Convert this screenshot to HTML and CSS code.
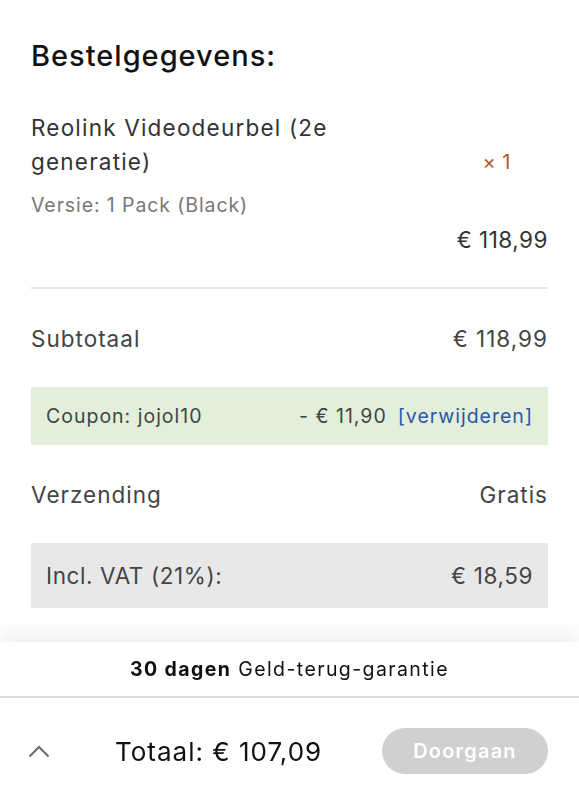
FILE: index.html
```html
<!DOCTYPE html>
<html lang="nl">
<head>
<meta charset="utf-8">
<link rel="stylesheet" href="styles.css">
</head>
<body>
<main class="page">
  <h1 class="title">Bestelgegevens:</h1>
  <section class="item">
    <div class="item-top">
      <div class="item-name">Reolink Videodeurbel (2e generatie)</div>
      <div class="item-qty">× 1</div>
    </div>
    <div class="item-variant">Versie: 1 Pack (Black)</div>
    <div class="item-price">€ 118,99</div>
  </section>
  <div class="row row-plain"><span>Subtotaal</span><span>€ 118,99</span></div>
  <div class="row row-coupon">
    <span>Coupon: jojol10</span>
    <span class="coupon-right"><span>- € 11,90</span><a class="remove">[verwijderen]</a></span>
  </div>
  <div class="row row-plain"><span>Verzending</span><span>Gratis</span></div>
  <div class="row row-vat"><span>Incl. VAT (21%):</span><span>€ 18,59</span></div>
</main>
<footer class="footer">
  <div class="guarantee"><b>30 dagen</b> Geld-terug-garantie</div>
  <div class="bar">
    <svg class="chev" width="22" height="14" viewBox="0 0 22 14"><path d="M1.5 12.5 L11 3 L20.5 12.5" fill="none" stroke="#6b6b6b" stroke-width="2"/></svg>
    <div class="total">Totaal: € 107,09</div>
    <button class="btn">Doorgaan</button>
  </div>
</footer>
</body>
</html>
```
FILE: styles.css
```css
* { box-sizing: border-box; }
body {
  margin: 0;
  background: #fff;
  font-family: Inter, "Noto Sans", sans-serif;
  color: #333;
}
.page {
  padding: 38px 31px 0 31px;
}
.title {
  margin: 0;
  font-size: 29px;
  font-weight: 500;
  color: #111;
  line-height: 36px;
  letter-spacing: 1px;
}
.item {
  margin-top: 37px;
  padding-bottom: 33px;
  border-bottom: 2px solid #e6e6e6;
}
.item-top {
  display: flex;
  justify-content: space-between;
  align-items: flex-end;
}
.item-name {
  width: 320px;
  font-size: 22.5px;
  line-height: 34px;
  letter-spacing: 1.2px;
  color: #333;
}
.item-qty {
  color: #b4572c;
  font-size: 20px;
  line-height: 34px;
  margin-right: 37px;
  letter-spacing: 0.5px;
}
.item-variant {
  margin-top: 12px;
  font-size: 19.5px;
  letter-spacing: 0.9px;
  color: #777;
  line-height: 28px;
}
.item-price {
  margin-top: 7px;
  text-align: right;
  font-size: 22.5px;
  letter-spacing: 0.5px;
  color: #333;
  line-height: 28px;
}
.row {
  display: flex;
  justify-content: space-between;
  align-items: center;
}
.row-plain {
  height: 98px;
  font-size: 22.5px;
  letter-spacing: 1px;
  color: #444;
}
.row-coupon {
  height: 58px;
  background: #e2efda;
  padding: 0 15px;
  font-size: 19.5px;
  letter-spacing: 1px;
  color: #444;
}
.coupon-right { display: flex; gap: 11px; }
.remove { color: #2b56ab; }
.row-vat {
  height: 65px;
  background: #e8e8e8;
  padding: 0 15px;
  font-size: 22.5px;
  letter-spacing: 0.6px;
  color: #444;
}
.footer {
  position: fixed;
  left: 0; right: 0; bottom: 0;
  height: 158px;
  background: #fff;
  box-shadow: 0 -8px 22px rgba(0,0,0,0.07);
}
.guarantee {
  height: 56px;
  display: flex;
  align-items: center;
  justify-content: center;
  font-size: 19.5px;
  letter-spacing: 1.4px;
  color: #111;
  border-bottom: 2px solid #dcdcdc;
}
.guarantee b { font-weight: 700; margin-right: 7px; }
.bar {
  display: flex;
  align-items: center;
  height: 100px;
  padding: 6px 31px 0 28px;
}
.chev { flex: none; }
.total {
  margin-left: 65px;
  font-size: 26px;
  letter-spacing: 1px;
  color: #111;
}
.btn {
  margin-left: auto;
  width: 166px;
  height: 46px;
  border: none;
  border-radius: 23px;
  background: #d0d0d0;
  color: #fff;
  font-family: inherit;
  font-size: 20px;
  letter-spacing: 1.2px;
  font-weight: 600;
}
```
